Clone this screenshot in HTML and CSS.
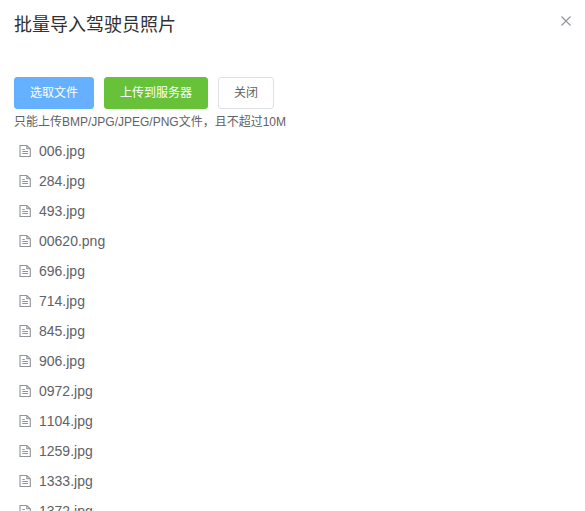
FILE: index.html
```html
<!DOCTYPE html>
<html lang="zh-CN">
<head>
<meta charset="UTF-8">
<title>批量导入驾驶员照片</title>
<link rel="stylesheet" href="styles.css">
</head>
<body>
<svg class="defs" width="0" height="0"><symbol id="doc" viewBox="0 0 14 14"><path d="M1 1.5H7.8L11.3 4.8V12.5H1ZM7.8 1.5V4.8H11.3M3.3 5.5H5.8M3.3 7.5H9M3.3 9.5H9"/></symbol></svg>
<main class="dialog">
<header class="header"><h1 class="title">批量导入驾驶员照片</h1>
<button class="close" aria-label="关闭"><svg width="12" height="12" viewBox="0 0 12 12"><path d="M1.5 1.5L10.5 10.5M10.5 1.5L1.5 10.5"/></svg></button></header>
<div class="actions"><button class="btn primary">选取文件</button><button class="btn success">上传到服务器</button><button class="btn">关闭</button></div>
<p class="tip">只能上传BMP/JPG/JPEG/PNG文件，且不超过10M</p>
<ul class="files">
<li><svg><use href="#doc"/></svg><span>006.jpg</span></li>
<li><svg><use href="#doc"/></svg><span>284.jpg</span></li>
<li><svg><use href="#doc"/></svg><span>493.jpg</span></li>
<li><svg><use href="#doc"/></svg><span>00620.png</span></li>
<li><svg><use href="#doc"/></svg><span>696.jpg</span></li>
<li><svg><use href="#doc"/></svg><span>714.jpg</span></li>
<li><svg><use href="#doc"/></svg><span>845.jpg</span></li>
<li><svg><use href="#doc"/></svg><span>906.jpg</span></li>
<li><svg><use href="#doc"/></svg><span>0972.jpg</span></li>
<li><svg><use href="#doc"/></svg><span>1104.jpg</span></li>
<li><svg><use href="#doc"/></svg><span>1259.jpg</span></li>
<li><svg><use href="#doc"/></svg><span>1333.jpg</span></li>
<li><svg><use href="#doc"/></svg><span>1372.jpg</span></li>
</ul>
</main>
</body>
</html>
```

FILE: styles.css
```css
* { box-sizing: border-box; }
body { margin: 0; background: #fff; height: 511px; overflow: hidden; font-family: "Liberation Sans", "Noto Sans CJK SC", sans-serif; font-kerning: none; }
.defs { position: absolute; }
.dialog { padding: 12px 13px 0 14px; }
.header { display: flex; justify-content: space-between; height: 65px; }
.title { margin: 0; font-size: 18px; line-height: 26px; font-weight: 400; color: #303133; }
.close { display: flex; width: 12px; height: 12px; margin-top: 3px; padding: 0; border: 0; background: none; }
.close path { fill: none; stroke: #909399; stroke-width: 1.1; }
.actions { display: flex; gap: 10px; }
.btn { height: 32px; padding: 0 15px; border: 1px solid #dcdfe6; border-radius: 3px; background: #fff; color: #606266; font: 400 12px/12px "Liberation Sans", "Noto Sans CJK SC", sans-serif; }
.primary { background: #66b1ff; border-color: #66b1ff; color: #fff; }
.success { background: #67c23a; border-color: #67c23a; color: #fff; }
.tip { margin: 5px 0 0; font-size: 12px; line-height: 16px; color: #606266; }
.files { list-style: none; margin: 9px 0 0; padding: 0; }
.files li { display: flex; align-items: flex-start; height: 25px; margin-bottom: 5px; padding-left: 5px; font-size: 14px; line-height: 25px; color: #606266; }
.files svg { width: 14px; height: 14px; margin: 5px 6px 0 0; fill: none; stroke: #909399; stroke-width: 1.1; }
```
